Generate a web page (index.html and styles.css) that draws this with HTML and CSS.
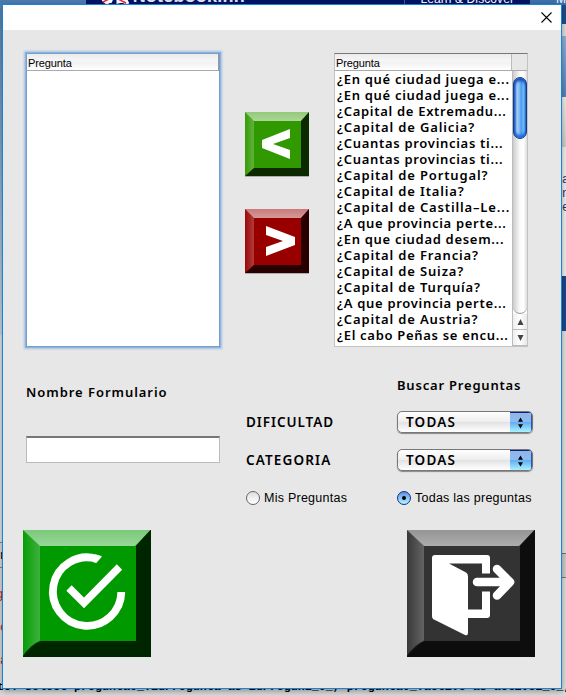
FILE: index.html
```html
<!DOCTYPE html>
<html lang="es">
<head>
<meta charset="utf-8">
<title>Formulario</title>
<link rel="stylesheet" href="styles.css">
</head>
<body>
<div class="desktop">
  <header class="site">
    <div class="site-side"></div>
    <div class="site-main"><svg class="site-mark" width="30" height="8" viewBox="0 0 30 8"><path d="M0 0l5 4 5-4M4 0l6 3M16 0v3l8-2 2 4M17 0l7 4" fill="none" stroke="#fff" stroke-width="3"/><path d="M1 3l6-3M16 0l8 4" stroke="#e24" stroke-width="1.5"/></svg><b>Notebookinn</b></div>
    <div class="site-learn">Learn &amp; Discover</div>
    <div class="site-more">M</div>
  </header>
  <div class="edge edge-left"><i class="e-blue"></i><i class="e-gray"></i><i class="e-tabs">n</i><i class="e-code">g<br>c<br>a</i></div>
  <div class="edge edge-right"><i class="r-navy"></i><i class="r-gray"></i><i class="r-sky"></i><i class="r-fade"></i><i class="r-text">a<br>n<br>e</i><i class="r-block"></i><i class="r-low"></i><i class="r-tabs"></i><i class="r-white"></i></div>
  <div class="console">te: select pregunta0_.idPregunta as idPregun1_0_, pregunta0_.activo as activo2_0_, p</div>
</div>

<main class="dialog">
  <div class="titlebar"><svg width="11" height="11" viewBox="0 0 11 11"><path d="M.5.5l10 10M10.5.5l-10 10" stroke="#000" stroke-width="1.1"/></svg></div>
  <div class="content">
    <section class="transfer">
      <div class="table focused">
        <div class="thead">Pregunta</div>
      </div>
      <div class="moves">
        <svg width="64" height="64" viewBox="0 0 64 64">
          <defs>
            <linearGradient id="shine" x1="0" y1="0" x2="0" y2="1"><stop offset="0" stop-color="#fff" stop-opacity=".48"/><stop offset="1" stop-color="#fff" stop-opacity=".6"/></linearGradient>
            <linearGradient id="side" x1="0" y1="0" x2="1" y2="0"><stop offset="0" stop-color="#fff" stop-opacity=".03"/><stop offset="1" stop-color="#fff" stop-opacity=".24"/></linearGradient>
            <filter id="soft" x="-10%" y="-10%" width="120%" height="120%"><feGaussianBlur stdDeviation=".6"/></filter>
            <g id="bevel">
              <path d="M0 0H64L56 9H9z" fill="url(#shine)"/>
              <path d="M0 0L9 9V56L0 64z" fill="url(#side)"/>
              <path d="M65 -1V65H-1L9 56H56V9z" fill="#000" fill-opacity=".73" filter="url(#soft)"/>
            </g>
          </defs>
          <rect width="64" height="64" fill="#309900"/><use href="#bevel"/>
          <path d="M45 17v9L28 32l17 6v9L17 36v-8z" fill="#fff"/>
        </svg>
        <svg width="64" height="64" viewBox="0 0 64 64">
          <rect width="64" height="64" fill="#980000"/><use href="#bevel"/>
          <path d="M21 17v9l17 6-17 6v9l29-11v-8z" fill="#fff"/>
        </svg>
      </div>
      <div class="table">
        <div class="thead"><span>Pregunta</span><span class="corner"></span></div>
        <div class="tbody">
          <ul class="rows">
            <li>¿En qué ciudad juega e...</li>
            <li>¿En qué ciudad juega e...</li>
            <li>¿Capital de Extremadu...</li>
            <li class="wide">¿Capital de Galicia?</li>
            <li>¿Cuantas provincias ti...</li>
            <li>¿Cuantas provincias ti...</li>
            <li class="wide">¿Capital de Portugal?</li>
            <li class="wide">¿Capital de Italia?</li>
            <li class="wide">¿Capital de Castilla–Le...</li>
            <li>¿A que provincia perte...</li>
            <li>¿En que ciudad desem...</li>
            <li class="wide">¿Capital de Francia?</li>
            <li class="wide">¿Capital de Suiza?</li>
            <li class="wide">¿Capital de Turquía?</li>
            <li>¿A que provincia perte...</li>
            <li class="wide">¿Capital de Austria?</li>
            <li>¿El cabo Peñas se encu...</li>
          </ul>
          <div class="scroll">
            <div class="track"><div class="thumb"></div></div>
            <div class="arrow"><svg width="7" height="6" viewBox="0 0 7 7"><path d="M3.5 0L7 7H0z" fill="#444"/></svg></div>
            <div class="arrow"><svg width="7" height="6" viewBox="0 0 7 7"><path d="M3.5 7L7 0H0z" fill="#444"/></svg></div>
          </div>
        </div>
      </div>
    </section>

    <section class="form">
      <div class="name">
        <label for="nombre">Nombre Formulario</label>
        <input id="nombre" class="field" type="text">
      </div>
      <div class="filters">
        <span></span><span class="search">Buscar Preguntas</span>
        <span class="caps">DIFICULTAD</span>
        <div class="combo"><span>TODAS</span><i><svg width="5" height="12" viewBox="0 0 6 13"><path d="M3 0l3 5H0zM3 13l3-5H0z" fill="#000"/></svg></i></div>
        <span class="caps cat">CATEGORIA</span>
        <div class="combo"><span>TODAS</span><i><svg width="5" height="12" viewBox="0 0 6 13"><path d="M3 0l3 5H0zM3 13l3-5H0z" fill="#000"/></svg></i></div>
        <div class="radio"><i></i><span>Mis Preguntas</span></div>
        <div class="radio on"><i></i><span>Todas las preguntas</span></div>
      </div>
    </section>

    <section class="actions">
      <svg width="128" height="127" viewBox="0 0 128 127">
        <defs>
          <g id="bevel-lg">
            <path d="M0 0H128L112 16H17z" fill="url(#shine)"/>
            <path d="M0 0L17 16V110L0 127z" fill="url(#side)"/>
            <path d="M130 -3V130H-3Q8 113 18 111H113V16Q117 11 130 -3z" fill="#000" fill-opacity=".75" filter="url(#soft)"/>
          </g>
        </defs>
        <rect width="128" height="127" fill="#009900"/><use href="#bevel-lg"/>
        <path d="M73.500 28.700A34.200 34.200 0 1 0 98.300 62" fill="none" stroke="#fff" stroke-width="7.800"/>
        <path d="M72 24.300Q76 25.200 79 26.600L73.300 33 70 32z" fill="#fff"/>
        <path d="M46 58l15 15 35.500-36" fill="none" stroke="#fff" stroke-width="7.500"/>
      </svg>
      <svg width="128" height="127" viewBox="0 0 128 127">
        <rect width="128" height="127" fill="#333"/><use href="#bevel-lg"/>
        <path d="M28 25H80q3 0 3 3V43.500H75V33.500H42L59 42.500q2 1 2 4V79.500H75V61.500H83V85q0 3-3 3H61v15q0 3-3 2L28 90q-3-1-3-4V28q0-3 3-3z" fill="#fff"/>
        <path d="M70 52h33M90 39l13 13-13 13.500" fill="none" stroke="#fff" stroke-width="8.500" stroke-linecap="round" stroke-linejoin="round"/>
      </svg>
    </section>
  </div>
</main>
</body>
</html>
```
FILE: styles.css
```css
* { box-sizing: border-box; }
body {
  margin: 0; width: 566px; height: 696px; overflow: hidden; position: relative;
  font: 600 13px/16px "Noto Sans", sans-serif; color: #000; letter-spacing: .7px;
}
i { font-style: normal; display: block; }
svg { display: block; }

.desktop { position: absolute; inset: 0; background: #d9d9d9; overflow: hidden; display: grid; grid-template: 5px 1fr 7px / 3px 1fr 4px; letter-spacing: 0; }
.site { grid-column: 1 / 4; display: flex; overflow: hidden; height: 5px; color: #fff; font: 12px/14px "Liberation Sans", sans-serif; }
.site > div { height: 14px; margin-top: -8px; }
.site-side { width: 86px; background: #4a7bb0; }
.site-main { width: 320px; background: #001468; display: flex; padding-left: 16px; gap: 1px; font: 18px/14px "Liberation Sans", sans-serif; }
.site-main b { line-height: 9px; color: #e4e4ee; letter-spacing: .2px; }
.site-mark { margin-top: 7px; }
.site-learn { width: 126px; background: #001468; border-left: 1px solid #345ba0; padding-left: 15px; letter-spacing: .1px; }
.site-more { flex: 1; background: #3c72ae; padding-left: 26px; }
.edge { display: flex; flex-direction: column; overflow: hidden; font: 12px/14px "Liberation Mono", monospace; }
.e-blue { height: 330px; background: linear-gradient(#5582b3, #7fa3c8 40%, #c8d6e5); }
.e-gray { flex: 1; background: #dce3ea; }
.e-tabs { height: 26px; border-top: 1px solid #789; border-bottom: 1px solid #789; line-height: 26px; }
.e-code { height: 110px; color: #b22; line-height: 33px; margin-top: 11px; text-indent: -4px; }
.edge-right { grid-column: 3; }
.r-navy { height: 19px; background: #1d4f8d; }
.r-gray { height: 12px; background: #ddd; }
.r-sky { height: 61px; background: linear-gradient(#8fb2da, #4d83bd); }
.r-fade { height: 50px; background: linear-gradient(#eee, #ccc); }
.r-text { height: 129px; background: #eee; padding-top: 26px; color: #236; }
.r-block { height: 55px; background: #17498c; }
.r-low { height: 222px; background: #e0e0e0; }
.r-tabs { height: 25px; background: #ccc; border-top: 1px solid #777; border-bottom: 1px solid #777; }
.r-white { flex: 1; background: #ddd; }
.console { grid-column: 1 / 4; height: 7px; font: bold 11.670px/0 "Liberation Mono", monospace; white-space: pre; text-indent: -3px; transform: translateY(-2px); }

.dialog { position: absolute; left: 2px; top: 4px; width: 560px; height: 685px; border: 1px solid #1883d7; background: #e7e7e7; box-shadow: 0 2px 6px rgba(0,0,0,.35); }
.titlebar { height: 25px; background: #fff; display: flex; justify-content: flex-end; padding: 7px 9px 0 0; }
.content { padding-top: 23px; }

.transfer { display: flex; padding-left: 23px; height: 324px; }
.table { width: 194px; height: 294px; background: #fff; border: 1px solid #c2c2c2; border-top: 1px solid #777; display: flex; flex-direction: column; }
.focused { border: 1px solid #789fc9; box-shadow: 0 0 0 1px #8bb5e0, 0 0 2px 2px #a3c2e3; }
.thead { height: 17px; flex: none; display: flex; justify-content: space-between; border-bottom: 1px solid #aaa; background: linear-gradient(#ececec, #f7f7f7 50%, #f1f1f1 52%, #fff); padding-left: 1px; font: 11px/18px "Liberation Sans", sans-serif; letter-spacing: -.1px; }
.focused .thead { border-right: 1px solid #999; padding-left: 1px; }
.corner { width: 16px; background: #e7e7e7; border-left: 1px solid #bbb; }
.tbody { display: flex; flex: 1; min-height: 0; }
.rows { list-style: none; margin: 0; padding: 0 0 0 2px; flex: 1; white-space: nowrap; overflow: hidden; }
.rows li { height: 16px; line-height: 16px; }
.rows .wide { letter-spacing: .85px; }
.scroll { width: 15px; display: flex; flex-direction: column; border-left: 1px solid #bbb; }
.track { flex: 1; background: linear-gradient(90deg, #ccc, #fafafa 50%, #fff 75%, #ddd); border-bottom: 1px solid #999; border-radius: 0 0 8px 8px; padding-top: 6px; }
.thumb { width: 14px; height: 62px; border-radius: 7px; border: 1px solid #143b8c; background: linear-gradient(90deg, #1c58c4, #a8d0f8 25%, #82b9f2 45%, #4b9aee 60%, #7bc8ff 85%, #2c6bc8); box-shadow: inset 0 3px 3px #1650b8, inset 0 -3px 3px #1f6ad4; }
.arrow { height: 16px; display: flex; align-items: center; justify-content: center; background: linear-gradient(90deg, #eee, #fff, #e8e8e8); border-bottom: 1px solid #bbb; }

.moves { width: 114px; padding: 59px 0 0 25px; display: flex; flex-direction: column; gap: 33px; }
.moves svg { filter: drop-shadow(0 1px .5px rgba(0,0,0,.25)); }

.form { display: flex; padding-left: 23px; height: 153px; }
.name { width: 220px; display: flex; flex-direction: column; padding-top: 7px; letter-spacing: .95px; }
.field { width: 194px; height: 27px; margin-top: 36px; border: 1px solid #bbb; border-top: 2px solid #777; background: #fff; padding: 0 4px; font: inherit; outline: none; }
.filters { display: grid; grid-template-columns: 151px 136px; grid-template-rows: 16px 22px 22px 16px; row-gap: 16px; align-content: start; align-items: center; }
.filters > :nth-child(n+3) { position: relative; top: 2px; }
.search { letter-spacing: .8px; }
.caps { font-size: 13.500px; letter-spacing: .95px; }
.cat { letter-spacing: 1.15px; }
.combo { height: 22px; display: flex; border: 1px solid #777; border-radius: 5px; overflow: hidden; background: linear-gradient(#fff, #eee 48%, #e2e2e2 50%, #fff); box-shadow: 0 1px 1px #888; padding-left: 8px; justify-content: space-between; font-size: 13.500px; letter-spacing: 1.2px; line-height: 21px; }
.combo i { width: 22px; display: flex; align-items: center; justify-content: center; background: linear-gradient(#90b6e8, #8dbcf0 48%, #65aef2 50%, #a8f2ff); border-top: 1px solid #102080; border-right: 1px solid #2856a8; }
.filters > .radio { display: flex; align-items: center; gap: 4px; font: 12.500px/16px "Liberation Sans", sans-serif; letter-spacing: .25px; white-space: nowrap; top: 5px; }
.radio i { width: 14px; height: 14px; border-radius: 50%; border: 1px solid #666; background: linear-gradient(#ddd, #f0f0f0 50%, #fff); flex: none; display: flex; align-items: center; justify-content: center; }
.radio.on i { border-color: #122f86; background: linear-gradient(#5c8bdb, #8fc4f6 50%, #aef5ff); }
.on i::after { content: ""; width: 4px; height: 4px; border-radius: 50%; background: #000; }

.actions { display: flex; justify-content: space-between; padding: 0 26px 0 20px; }
```
